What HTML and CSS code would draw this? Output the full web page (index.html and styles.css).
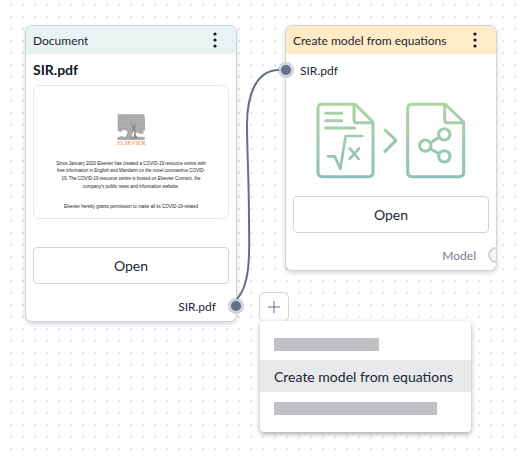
FILE: index.html
```
<!DOCTYPE html>
<html lang="en">
<head>
<meta charset="utf-8">
<title>Workflow</title>
<link rel="stylesheet" href="styles.css">
</head>
<body>
<main class="canvas">
  <section class="node node-document">
    <header class="node-header">
      <span>Document</span>
      <button class="more" type="button" aria-label="Document options">
        <svg width="4" height="16" viewBox="0 0 4 16"><circle cx="2" cy="2" r="1.6"/><circle cx="2" cy="8" r="1.6"/><circle cx="2" cy="14" r="1.6"/></svg>
      </button>
    </header>
    <div class="node-body">
      <h2 class="title">SIR.pdf</h2>
      <svg class="preview" viewBox="0 0 1164 792">
        <defs>
          <pattern id="etch" width="7" height="7" patternUnits="userSpaceOnUse">
            <rect width="7" height="7" fill="#bdbdbd"/>
            <path d="M0 1h3M4 3h3M1 5h3" stroke="#8a8a8a" stroke-width="2"/>
          </pattern>
        </defs>
        <g transform="scale(2)">
          <path fill="url(#etch)" d="M251 85H331V92L333 98V132L327 137L330 143H316L308 139L304 146L308 152H332V162H250V154L266 150L277 147L281 139L276 133L266 132L261 138L251 134Z"/>
          <path fill="#8c8c8c" d="M292 110l7 10 8-8-3 18 1 18 9 9h-28l8-10 1-17z"/>
          <path fill="#fff" d="M266 140q3-8 8-2l4 9-4 5h-8zM296 139l5-5-1 17-7 3z"/>
        </g>
        <text class="brand" x="584" y="354">ELSEVIER</text>
        <text class="copy" x="582" y="472">Since January 2020 Elsevier has created a COVID-19 resource centre with</text>
        <text class="copy" x="582" y="518">free information in English and Mandarin on the novel coronavirus COVID-</text>
        <text class="copy" x="582" y="564">19. The COVID-19 resource centre is hosted on Elsevier Connect, the</text>
        <text class="copy" x="582" y="610">company's public news and information website.</text>
        <text class="copy" x="582" y="732">Elsevier hereby grants permission to make all its COVID-19-related</text>
      </svg>
      <button class="open" type="button">Open</button>
      <div class="row row-out">SIR.pdf<span class="port port-right port-on"></span></div>
    </div>
  </section>

  <section class="node node-model">
    <header class="node-header">
      <span>Create model from equations</span>
      <button class="more" type="button" aria-label="Model options">
        <svg width="4" height="16" viewBox="0 0 4 16"><circle cx="2" cy="2" r="1.6"/><circle cx="2" cy="8" r="1.6"/><circle cx="2" cy="14" r="1.6"/></svg>
      </button>
    </header>
    <div class="node-body">
      <div class="row row-in"><span class="port port-left port-on"></span>SIR.pdf</div>
      <svg class="art" width="150" height="77" viewBox="48 36 450 231" fill="none" stroke="url(#fade)" stroke-width="9" stroke-linecap="round" stroke-linejoin="round">
        <defs>
          <linearGradient id="fade" gradientUnits="userSpaceOnUse" x1="0" y1="38" x2="0" y2="264">
            <stop offset="0" stop-color="#aed4a3"/><stop offset="1" stop-color="#8bc0b9"/>
          </linearGradient>
        </defs>
        <path d="M66 43H166L219 96V247Q219 260 206 260H67Q54 260 54 247V56Q54 43 66 43ZM162 45V89Q162 98 171 98H217"/>
        <path d="M77 70H125M77 92H125M77 114H164"/>
        <path stroke-width="8" d="M84 199H104L121 236L137 138H187M149 175L176 207M177 175L149 207"/>
        <path d="M255 120L288 151L255 184"/>
        <path d="M336 43H436L491 96V247Q491 260 478 260H336Q323 260 323 247V56Q323 43 336 43ZM434 45V89Q434 98 443 98H489"/>
        <circle cx="376" cy="167" r="17"/><circle cx="433" cy="133" r="17"/><circle cx="433" cy="199" r="17"/>
        <path d="M392 158L417 142M392 177L417 191"/>
      </svg>
      <button class="open" type="button">Open</button>
      <div class="row row-out row-muted">Model<span class="port-clip"><span class="port"></span></span></div>
    </div>
  </section>

  <svg class="edge" width="60" height="240" viewBox="230 64 60 240"><path d="M237 299C252 283 249 245 249 220C249 180 247 150 247 125C247 95 256 70 279 70"/></svg>

  <div class="adder">
    <button class="add" type="button" aria-label="Add node">
      <svg width="12" height="12" viewBox="0 0 12 12"><path d="M0 6H12M6 0V12"/></svg>
    </button>
    <div class="menu" role="menu">
      <button class="item" type="button" role="menuitem" aria-label="Loading"><span class="bar bar-short"></span></button>
      <button class="item item-active" type="button" role="menuitem">Create model from equations</button>
      <button class="item" type="button" role="menuitem" aria-label="Loading"><span class="bar bar-long"></span></button>
    </div>
  </div>
</main>
</body>
</html>
```
FILE: styles.css
```
* { box-sizing: border-box; }
body {
  margin: 0;
  font-family: Lato, "Liberation Sans", sans-serif;
  color: #1d2636;
}
button { font: inherit; color: inherit; padding: 0; border: 0; background: none; }
svg { display: block; }
.canvas {
  position: relative;
  min-height: 100vh;
  overflow: hidden;
  background: #fff radial-gradient(circle at 6px 6px, #e2e4e6 1px, transparent 1px) 5px 11px / 12px 12px;
}
.node {
  position: absolute;
  top: 25px;
  width: 212px;
  background: #fff;
  border: 1px solid #cdd3df;
  border-radius: 7px;
  box-shadow: 0 2px 4px rgba(20, 30, 60, 0.18);
}
.node-document { left: 25px; }
.node-model { left: 285px; }
.node-header {
  display: flex;
  align-items: center;
  justify-content: space-between;
  height: 28px;
  padding: 0 19px 0 7px;
  border-radius: 6px 6px 0 0;
  background: #e9f3f2;
  font-size: 12px;
}
.node-model .node-header { background: #ffebc5; }
.more { fill: #101828; }
.node-body { padding: 0 7px; }
.title { margin: 0; font-size: 14px; line-height: 31px; font-weight: 700; color: #101828; }
.preview {
  width: 100%;
  height: 134px;
  border: 1px solid #e5e7eb;
  border-radius: 6px;
}
.brand { font: 36px "Liberation Serif", serif; fill: #f58a3c; text-anchor: middle; }
.copy { font: 27px "Liberation Sans", sans-serif; fill: #222; text-anchor: middle; }
.open {
  display: block;
  width: 100%;
  height: 37px;
  border: 1px solid #cdd3df;
  border-radius: 4px;
  font-size: 14px;
}
.node-document .open { margin-top: 28px; }
.row {
  position: relative;
  display: flex;
  align-items: center;
  height: 32px;
  font-size: 12px;
}
.row-in { padding-left: 7px; }
.row-out { justify-content: flex-end; height: 37px; padding: 7px 13px 0 0; }
.row-muted { color: #747e91; }
.port {
  width: 16px;
  height: 16px;
  border: 2px solid #cdd3df;
  border-radius: 50%;
  background: #f3f4f5;
}
.port-on { position: absolute; border-width: 3px; background: #667085; }
.port-left { left: -15px; }
.port-right { right: -15px; }
.port-clip { position: absolute; right: -7px; width: 8px; overflow: hidden; }
.port-clip .port { display: block; }
.art { margin: 16px auto 17px; }
.edge { position: absolute; left: 230px; top: 64px; fill: none; stroke: #667085; stroke-width: 2; }
.adder { position: absolute; left: 259px; top: 292px; }
.add {
  display: flex;
  align-items: center;
  justify-content: center;
  width: 30px;
  height: 30px;
  border: 1px solid #cdd3df;
  border-radius: 6px;
  background: #fff;
  stroke: #667085;
}
.menu {
  position: absolute;
  left: 1px;
  top: 29px;
  min-width: 211px;
  padding: 7px 0 8px;
  background: #fff;
  border-radius: 4px;
  box-shadow: 0 2px 5px rgba(0, 0, 0, 0.35);
}
.item {
  display: flex;
  align-items: center;
  width: 100%;
  height: 32px;
  padding: 0 14px;
  font-size: 14px;
  white-space: nowrap;
}
.item-active { background: #e8e9eb; }
.bar { height: 13px; background: #c0c1c5; }
.bar-short { width: 105px; }
.bar-long { width: 163px; }
```
